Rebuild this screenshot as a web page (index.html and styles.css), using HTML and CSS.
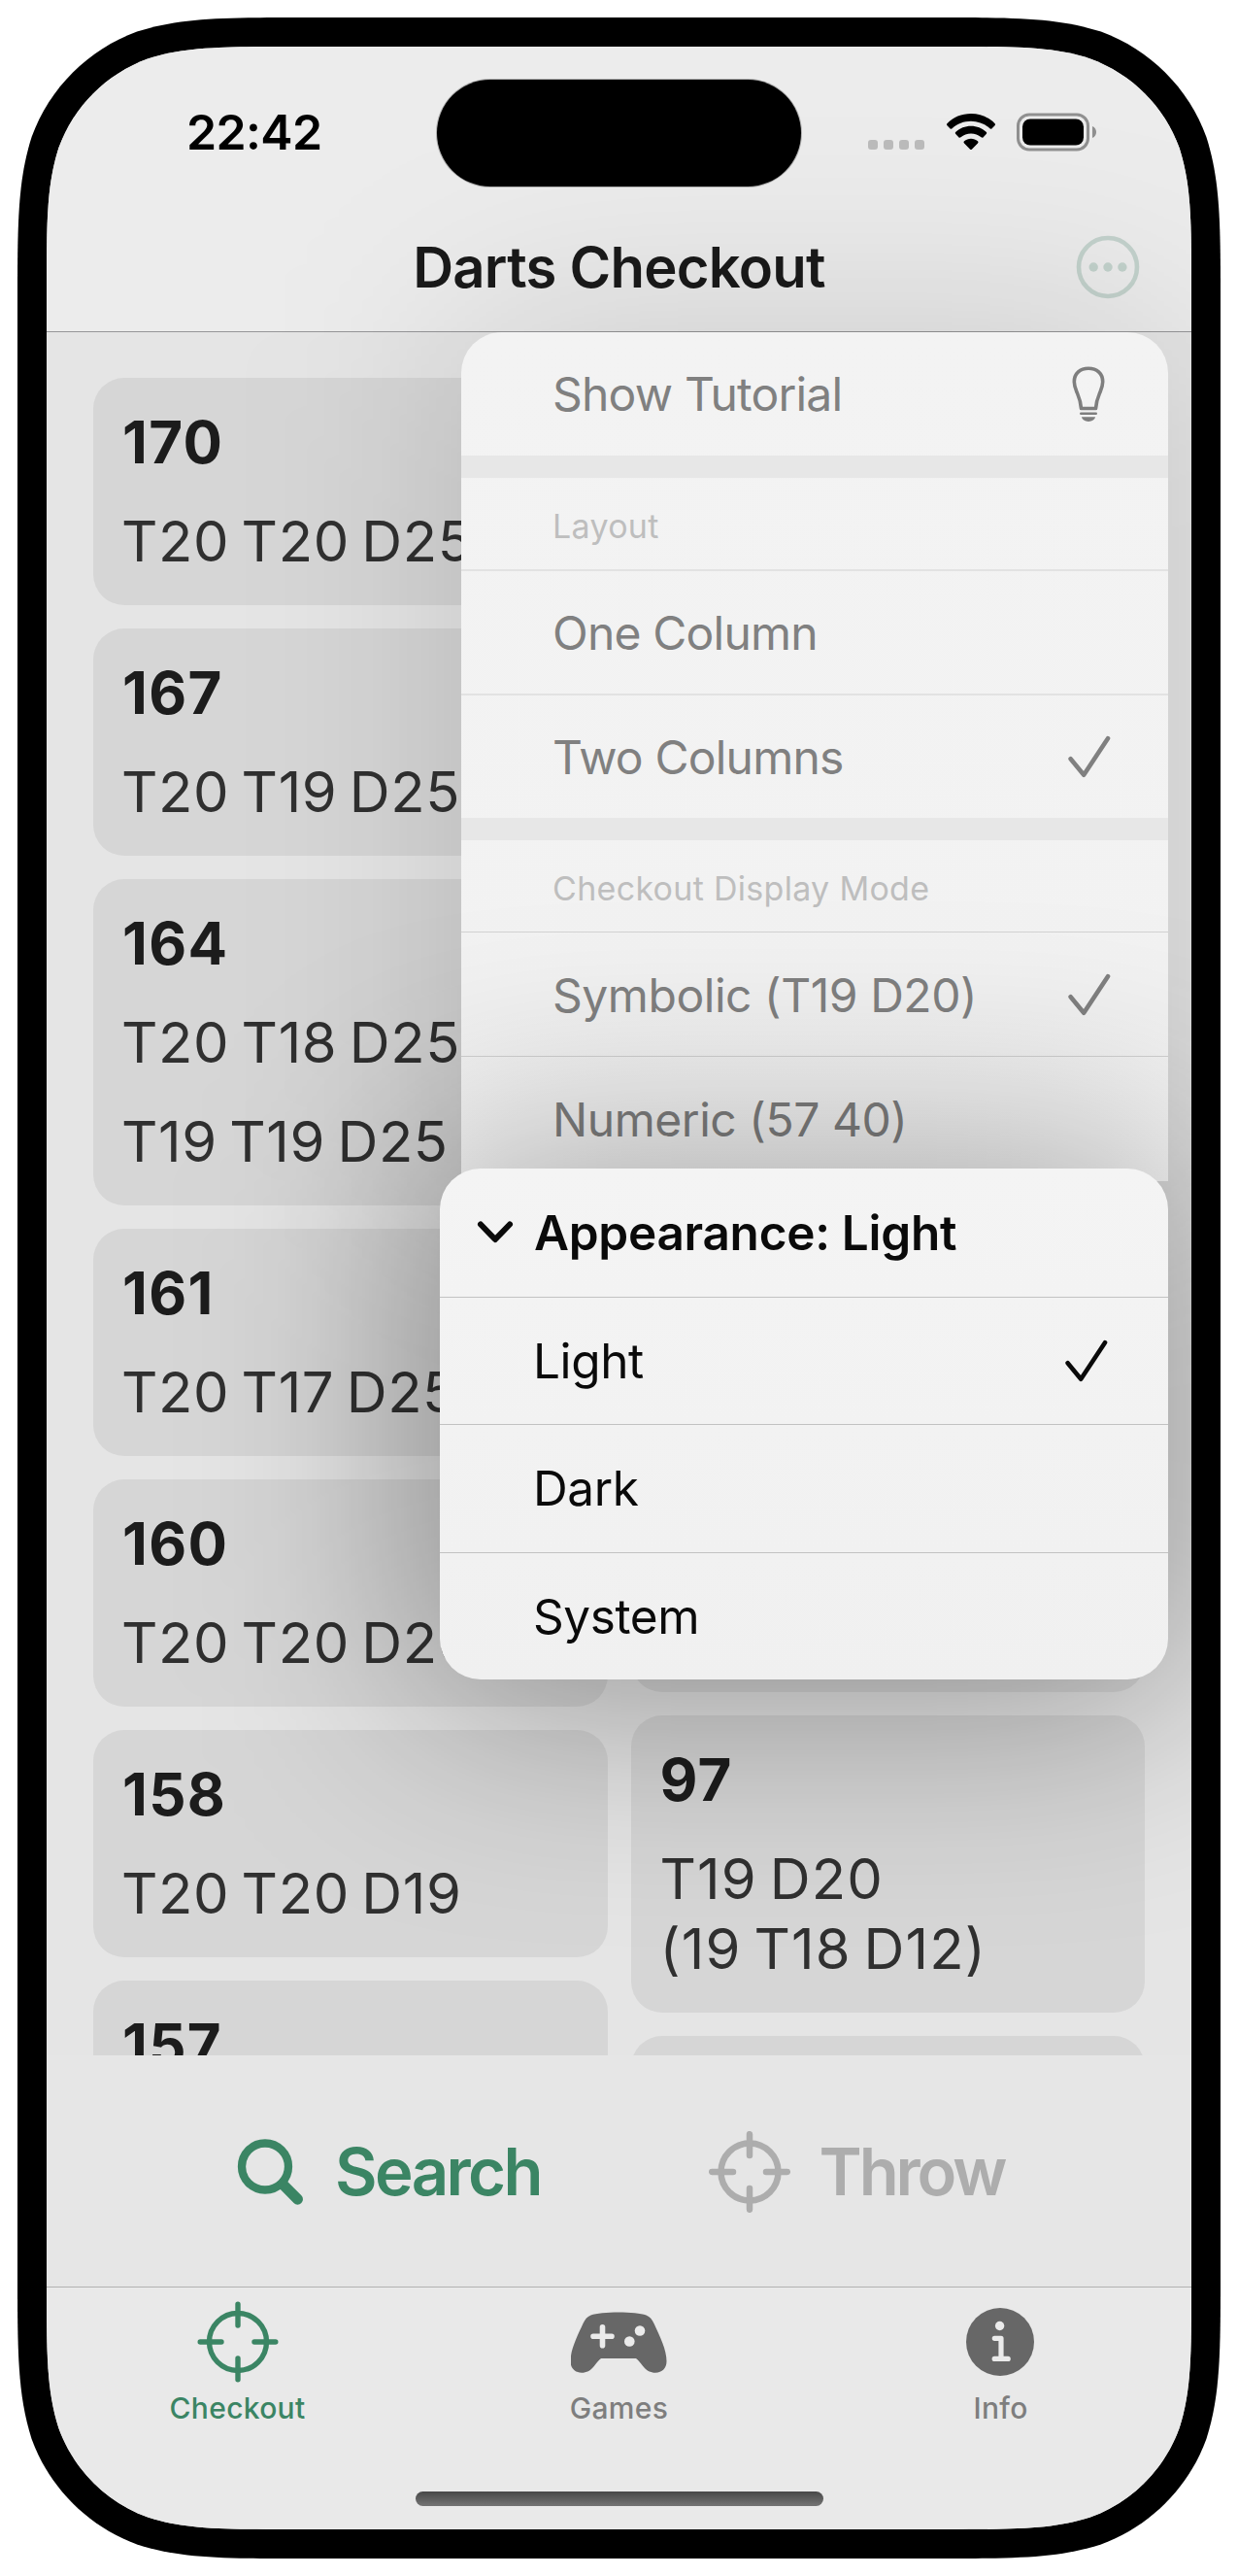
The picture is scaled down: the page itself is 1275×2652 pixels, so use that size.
FILE: index.html
```
<!DOCTYPE html>
<html lang="en">
<head>
<meta charset="utf-8">
<title>Darts Checkout</title>
<link rel="stylesheet" href="styles.css">
</head>
<body>
<svg class="defs" width="0" height="0" aria-hidden="true">
  <symbol id="scope" viewBox="0 0 84 84">
    <circle class="ring" cx="42" cy="42" r="29.5"/>
    <path class="ticks" d="M42 3.2V25M42 59v21.8M3.2 42H25M59 42h21.8"/>
  </symbol>
  <symbol id="check" viewBox="0 0 44 44">
    <path d="M2.6 24.2 16.2 40.8 41 3.2"/>
  </symbol>
</svg>
<div class="phone">
  <div class="screen">
    <header class="top">
      <div class="status">
        <span class="time">22:42</span>
        <span class="island"></span>
        <span class="indicators">
          <span class="cell"><i></i><i></i><i></i><i></i></span>
          <svg class="wifi" width="50" height="38" viewBox="0 0 50 38">
            <path d="M25 0C34.600 0 43.200 3.700 49.400 9.900c.8.800.8 1.500.1 2.300l-2.900 3c-.7.700-1.500.7-2.200.1C39.200 10.500 32.400 7.800 25 7.800S10.800 10.500 5.600 15.300c-.7.600-1.500.6-2.200-.1l-2.900-3c-.7-.8-.7-1.500.1-2.300C6.800 3.700 15.400 0 25 0Z"/>
            <path d="M25 12.800c6 0 11.500 2.300 15.600 6 .8.700.8 1.500.1 2.300l-3 3.100c-.7.700-1.400.7-2.200.1-2.900-2.400-6.500-3.800-10.500-3.800s-7.600 1.400-10.500 3.800c-.8.600-1.500.6-2.200-.1l-3-3.100c-.7-.8-.7-1.600.1-2.300 4.100-3.700 9.600-6 15.600-6Z"/>
            <path d="M25 25.800c2.600 0 5 .9 6.900 2.400.8.600.8 1.400.1 2.200l-5.900 6.100c-.7.700-1.500.7-2.200 0L18 30.400c-.7-.8-.7-1.600.1-2.200 1.900-1.500 4.300-2.400 6.900-2.400Z"/>
          </svg>
          <svg class="battery" width="83" height="40" viewBox="0 0 83 40">
            <rect x="1.500" y="2" width="72" height="36" rx="11.500" fill="none" stroke="#909090" stroke-width="3"/>
            <rect x="6" y="6.500" width="63" height="27" rx="8" fill="#000"/>
            <path d="M78 14c2.800 1.200 4 3.400 4 6s-1.200 4.800-4 6Z" fill="#909090"/>
          </svg>
        </span>
      </div>
      <div class="nav">
        <h1>Darts Checkout</h1>
        <svg class="more" width="66" height="66" viewBox="0 0 66 66">
          <circle cx="33" cy="33" r="30" fill="none" stroke="#c3d2cc" stroke-width="4.600"/>
          <g fill="#c3d2cc"><circle cx="18.200" cy="33" r="4.700"/><circle cx="33" cy="33" r="4.700"/><circle cx="47.900" cy="33" r="4.700"/></g>
        </svg>
      </div>
    </header>

    <main class="list">
      <div class="column">
        <article class="card"><h2>170</h2><p>T20 T20 D25</p></article>
        <article class="card"><h2>167</h2><p>T20 T19 D25</p></article>
        <article class="card"><h2>164</h2><p>T20 T18 D25</p><p>T19 T19 D25</p></article>
        <article class="card"><h2>161</h2><p>T20 T17 D25</p></article>
        <article class="card"><h2>160</h2><p>T20 T20 D20</p></article>
        <article class="card"><h2>158</h2><p>T20 T20 D19</p></article>
        <article class="card"><h2>157</h2></article>
      </div>
      <div class="column">
        <article class="card covered"></article>
        <article class="card"><h2>97</h2><p class="alt">T19 D20<br>(19 T18 D12)</p></article>
        <article class="card next"></article>
      </div>
    </main>

    <div class="actions">
      <button class="action search">
        <svg width="70" height="70" viewBox="0 0 70 70" fill="none" stroke="currentColor">
          <circle cx="29" cy="29.500" r="24" stroke-width="8.300"/>
          <path d="M47.500 48 62.500 63.200" stroke-width="11" stroke-linecap="round"/>
        </svg>
        Search
      </button>
      <button class="action throw">
        <svg class="scope" width="84" height="84"><use href="#scope"/></svg>
        Throw
      </button>
    </div>

    <footer class="bottom">
      <nav class="tabs">
        <a class="tab active">
          <svg class="scope" width="84" height="84"><use href="#scope"/></svg>
          <span>Checkout</span>
        </a>
        <a class="tab">
          <svg width="100" height="84" viewBox="1 0 100 84">
            <path fill="#676767" d="M50 11.500c12 0 23 1 28.500 3 4 1.500 6 4.500 8 8.500C92.500 36 99.500 50 99.500 62c0 7-4.500 11.700-11.500 11.700-5 0-9-2-13-7-3.200-4-5-6.200-6.300-7.200-.6-.4-1.100-.5-2-.5H33.300c-.9 0-1.400.100-2 .5-1.300 1-3.100 3.200-6.300 7.200-4 5-8 7-13 7C5 73.700.5 69 .5 62c0-12 7-26 13-39 2-4 4-7 8-8.500 5.500-2 16.500-3 28.500-3Z"/>
            <path fill="none" stroke="#ebebeb" stroke-width="5.600" stroke-linecap="round" d="M33.500 26.700v19M24 36.200h19"/>
            <circle cx="72" cy="30.500" r="5.300" fill="#ebebeb"/><circle cx="61.300" cy="41.500" r="5.300" fill="#ebebeb"/>
          </svg>
          <span>Games</span>
        </a>
        <a class="tab">
          <svg width="72" height="84" viewBox="0 0 72 84">
            <circle cx="35" cy="42" r="35" fill="#676767"/>
            <circle cx="34.600" cy="25.500" r="4.700" fill="#ebebeb"/>
            <path fill="none" stroke="#ebebeb" stroke-width="5.200" stroke-linecap="round" stroke-linejoin="round" d="M29.300 38.300h6.700v21M29.200 59.400h14"/>
          </svg>
          <span>Info</span>
        </a>
      </nav>
      <span class="home"></span>
    </footer>

    <div class="shade main-shade"></div>
    <div class="menu main-menu">
      <div class="item">Show Tutorial
        <svg class="bulb" width="40" height="60" viewBox="0 0 40 60" fill="none" stroke="#7e7e7e" stroke-width="3.600">
          <path stroke-linejoin="round" d="M12.500 44.500h15c.6-8.500 2.300-11.500 4.600-17 1.500-3.600 2.600-6.400 2.600-10.500C34.700 8.500 28.500 3.200 20 3.200S5.300 8.500 5.300 17c0 4.100 1.100 6.900 2.600 10.500 2.300 5.500 4 8.500 4.600 17Z"/>
          <path stroke-width="2.600" stroke-linecap="round" d="M12.300 49.700h15.400"/>
          <path fill="#7e7e7e" stroke="none" d="M13 53.300h14c-.3 2.600-3.200 4.600-7 4.600s-6.700-2-7-4.600Z"/>
        </svg>
      </div>
      <div class="band"></div>
      <div class="caption">Layout</div>
      <div class="item">One Column</div>
      <div class="item">Two Columns <svg class="check" width="44" height="44"><use href="#check"/></svg></div>
      <div class="band"></div>
      <div class="caption">Checkout Display Mode</div>
      <div class="item wide">Symbolic (T19 D20) <svg class="check" width="44" height="44"><use href="#check"/></svg></div>
      <div class="item wide">Numeric (57 40)</div>
    </div>

    <div class="shade sub-shade"></div>
    <div class="menu sub-menu">
      <div class="item heading">
        <svg class="chevron" width="38" height="26" viewBox="0 0 38 26"><path d="M4 4.500 19 20 34 4.500"/></svg>
        Appearance: Light
      </div>
      <div class="item">Light <svg class="check" width="44" height="44"><use href="#check"/></svg></div>
      <div class="item">Dark</div>
      <div class="item">System</div>
    </div>
  </div>
</div>
</body>
</html>
```
FILE: styles.css
```
* { box-sizing: border-box; }
body {
  margin: 0;
  padding: 18px;
  background: #fff;
  font-family: Inter, "Liberation Sans", sans-serif;
}
.defs { display: block; position: absolute; }
h1, h2, p { margin: 0; font-weight: 400; }

.phone {
  width: 1239px;
  height: 2616px;
  padding: 30px;
  background: #000;
  clip-path: path("M298.1,0 L940.9,0 C1026.7,0 1069.7,0 1115.9,14.6 C1166.3,33 1206,72.7 1224.4,123.1 C1239,169.3 1239,212.3 1239,298.1 L1239,2317.9 C1239,2403.7 1239,2446.7 1224.4,2492.9 C1206,2543.3 1166.3,2583 1115.9,2601.4 C1069.7,2616 1026.7,2616 940.9,2616 L298.1,2616 C212.3,2616 169.3,2616 123.1,2601.4 C72.7,2583 33,2543.3 14.6,2492.9 C0,2446.7 0,2403.7 0,2317.9 L0,298.1 C0,212.3 0,169.3 14.6,123.1 C33,72.7 72.7,33 123.1,14.6 C169.3,0 212.3,0 298.1,0 Z");
}
.screen {
  position: relative;
  display: flex;
  flex-direction: column;
  width: 1179px;
  height: 2556px;
  overflow: hidden;
  background: #e5e5e5;
  clip-path: path("M252.2,0 L926.8,0 C999.4,0 1035.7,0 1074.8,12.4 C1117.5,27.9 1151.1,61.5 1166.6,104.2 C1179,143.3 1179,179.6 1179,252.2 L1179,2303.8 C1179,2376.4 1179,2412.7 1166.6,2451.8 C1151.1,2494.5 1117.5,2528.1 1074.8,2543.6 C1035.7,2556 999.4,2556 926.8,2556 L252.2,2556 C179.6,2556 143.3,2556 104.2,2543.6 C61.5,2528.1 27.9,2494.5 12.4,2451.8 C0,2412.7 0,2376.4 0,2303.8 L0,252.2 C0,179.6 0,143.3 12.4,104.2 C27.9,61.5 61.5,27.9 104.2,12.4 C143.3,0 179.6,0 252.2,0 Z");
}

/* Status bar and navigation bar */
.top {
  height: 294px;
  border-bottom: 1px solid #969698;
  background: #ececec;
}
.status {
  display: grid;
  grid-template-columns: 402px 375px 1fr;
  align-items: start;
  height: 162px;
  padding-top: 34px;
}
.time {
  padding: 24px 0 0 144px;
  font-size: 50px;
  font-weight: 600;
  letter-spacing: -.64px;
  line-height: 60px;
}
.island {
  height: 110px;
  border-radius: 55px;
  background: #000;
  box-shadow: 0 0 0 1px #b0b0b0;
}
.indicators { display: flex; padding: 34px 0 0 69px; }
.cell { display: flex; gap: 6px; padding-top: 28px; margin-right: 23px; }
.cell i { width: 10px; height: 10px; border-radius: 3px; background: #bbb; }
.wifi { margin: 1px 22px 0 0; }
.nav {
  display: grid;
  grid-template-columns: 1fr auto 1fr;
  align-items: center;
  height: 130px;
}
.nav h1 {
  grid-column: 2;
  font-size: 58px;
  font-weight: 600;
  letter-spacing: -.74px;
  line-height: 72px;
  color: #1a1a1a;
}
.more { justify-self: end; margin-right: 53px; }

/* Checkout cards */
.list {
  display: grid;
  grid-template-columns: 1fr 1fr;
  align-items: start;
  gap: 24px;
  height: 1774px;
  padding: 47px 48px 0;
  overflow: hidden;
}
.column { display: flex; flex-direction: column; gap: 24px; }
.card {
  display: flex;
  flex-direction: column;
  gap: 30px;
  padding: 30px;
  border-radius: 32px;
  background: #d6d6d6;
}
.card h2 {
  font-size: 60px;
  font-weight: 700;
  letter-spacing: 1.3px;
  line-height: 72px;
  color: #1c1c1c;
}
.card p {
  margin-left: -1px;
  font-size: 58px;
  letter-spacing: .6px;
  word-spacing: -4.500px;
  line-height: 72px;
  color: #303030;
}
.card .alt { letter-spacing: 1.1px; margin-left: 0; }
.covered { height: 1353px; }
.next { height: 234px; }

/* Search / throw panel */
.actions {
  display: grid;
  grid-template-columns: 1fr 1fr;
  height: 239px;
  border-bottom: 1px solid #b2b2b2;
  background: #e6e6e6;
}
.action {
  display: flex;
  align-items: center;
  padding: 2px 0 0;
  border: 0;
  background: none;
  font: 600 67px/80px Inter, "Liberation Sans", sans-serif;
  letter-spacing: -2.600px;
}
.search { padding-left: 196px; gap: 31px; color: #3b8564; }
.throw { padding-left: 92px; gap: 30px; letter-spacing: -3.100px; color: #adadad; }

.scope { fill: none; stroke: currentColor; stroke-linecap: round; stroke-width: 6.500px; }

/* Tab bar */
.bottom {
  display: flex;
  flex-direction: column;
  align-items: center;
  height: 249px;
  background: #e9e9e9;
}
.tabs {
  display: grid;
  grid-template-columns: repeat(3, 1fr);
  width: 1179px;
  height: 210px;
  padding: 14px 0 0;
}
.tab {
  display: flex;
  flex-direction: column;
  align-items: center;
  gap: 8px;
  color: #7e7e7e;
}
.tab span {
  font-size: 30px;
  font-weight: 500;
  letter-spacing: .3px;
  line-height: 36px;
}
.tab.active { color: #3b8564; }
.tab .scope { stroke-width: 5.400px; }
.home {
  width: 420px;
  height: 15px;
  border-radius: 8px;
  background: linear-gradient(#484848, #747474);
}

/* Pop-over menus, each over a wide soft shade */
.menu, .shade {
  position: absolute;
  right: 24px;
  border-radius: 42px;
}
.main-shade {
  top: 294px;
  width: 728px;
  height: 874px;
  background: rgba(0, 0, 0, .15);
  filter: blur(110px);
}
.sub-shade {
  top: 1135px;
  right: 4px;
  width: 790px;
  height: 566px;
  background: rgba(0, 0, 0, .36);
  filter: blur(115px);
}
.item, .caption { display: flex; align-items: center; }
.menu .check {
  margin-left: auto;
  fill: none;
  stroke: currentColor;
  stroke-width: 4.600px;
  stroke-linecap: round;
  stroke-linejoin: round;
}

.main-menu {
  top: 294px;
  width: 728px;
  height: 874px;
  border-radius: 42px 42px 0 0;
  background: linear-gradient(#f3f3f3 0, #f2f2f2 80%, #fbfbfb 100%);
}
.main-menu .item {
  height: 127px;
  padding: 0 59px 0 94px;
  font-size: 48px;
  letter-spacing: -.800px;
  color: #808080;
}
.main-menu .wide { letter-spacing: -.450px; padding-top: 1px; }
.main-menu .caption {
  height: 94px;
  padding: 5px 0 0 94px;
  font-size: 34px;
  letter-spacing: .3px;
  color: #bebebe;
}
.main-menu .caption + .item,
.main-menu .item + .item {
  height: 128px;
  border-top: 2px solid #e2e2e2;
}
.main-menu .caption + .wide,
.main-menu .wide + .wide { border-top: 1px solid #d2d2d2; }
.band { height: 23px; background: #e7e7e7; }
.bulb { margin-left: auto; margin-right: 3px; }

.sub-menu {
  top: 1155px;
  width: 750px;
  background: linear-gradient(#f4f4f4, #f0f0f0);
}
.sub-menu .item {
  height: 131.500px;
  padding: 0 62px 0 96px;
  font-size: 49.500px;
  letter-spacing: -.400px;
  color: #0a0a0a;
}
.sub-menu .item + .item { border-top: 1px solid #c2c2c2; }
.sub-menu .heading {
  gap: 21px;
  padding-left: 38px;
  font-weight: 600;
  letter-spacing: -.280px;
}
.chevron {
  fill: none;
  stroke: currentColor;
  stroke-width: 6px;
  stroke-linecap: round;
  stroke-linejoin: round;
}
```
